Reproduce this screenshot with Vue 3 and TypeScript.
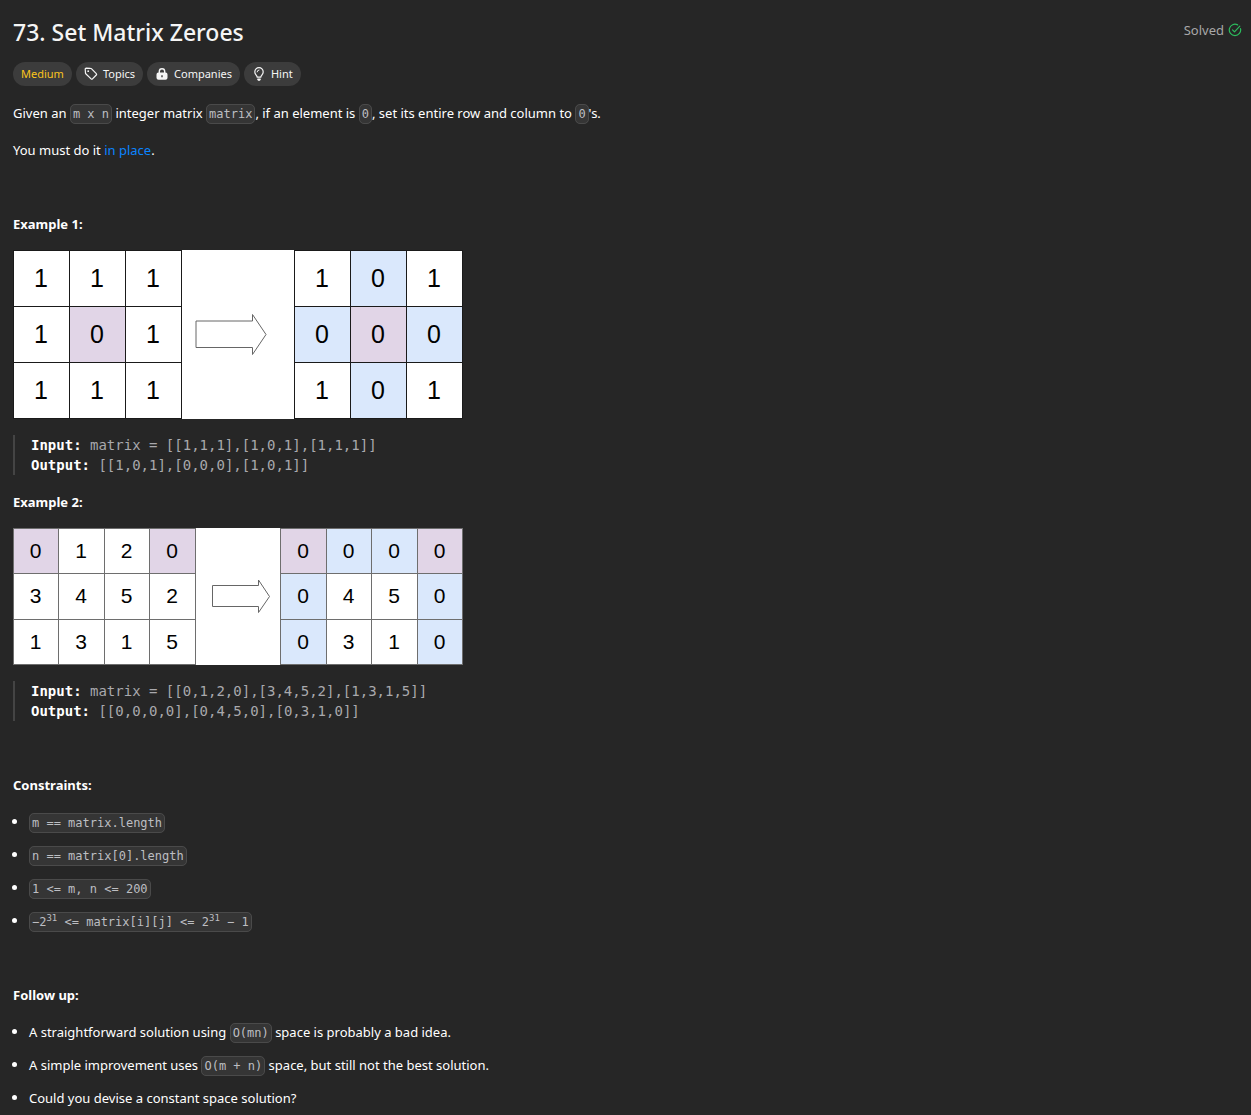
<script setup lang="ts">
interface Grid {
  x: number
  cols: number[]
  cells: string[]
  tints: string[]
}

interface Diagram {
  label: string
  height: number
  rows: number[]
  stroke: string
  fontSize: number
  baseline: number
  grids: Grid[]
  arrow: string
}

interface Example {
  title: string
  input: string
  output: string
  diagram: Diagram
}

// Tints: "." plain, "p" an original zero, "b" a cell cleared because of one.
const fills: Record<string, string> = { '.': '#ffffff', p: '#e1d5e7', b: '#dae8fc' }

const examples: Example[] = [
  {
    title: 'Example 1:',
    input: 'matrix = [[1,1,1],[1,0,1],[1,1,1]]',
    output: '[[1,0,1],[0,0,0],[1,0,1]]',
    diagram: {
      label: 'A 3 by 3 matrix before and after zeroing',
      height: 169,
      rows: [0, 56, 112, 168],
      stroke: '#1a1a1a',
      fontSize: 25,
      baseline: 37,
      grids: [
        { x: 0, cols: [0, 56, 112, 168], cells: ['111', '101', '111'], tints: ['...', '.p.', '...'] },
        { x: 281, cols: [0, 56, 112, 168], cells: ['101', '000', '101'], tints: ['.b.', 'bpb', '.b.'] },
      ],
      arrow: 'M183 71H239.5V64.5L253 84.5L239.5 104.5V97.5H183Z',
    },
  },
  {
    title: 'Example 2:',
    input: 'matrix = [[0,1,2,0],[3,4,5,2],[1,3,1,5]]',
    output: '[[0,0,0,0],[0,4,5,0],[0,3,1,0]]',
    diagram: {
      label: 'A 3 by 4 matrix before and after zeroing',
      height: 137,
      rows: [0, 45, 91, 136],
      stroke: '#6e6e6e',
      fontSize: 21,
      baseline: 30,
      grids: [
        { x: 0, cols: [0, 45, 91, 136, 182], cells: ['0120', '3452', '1315'], tints: ['p..p', '....', '....'] },
        { x: 267, cols: [0, 46, 91, 137, 182], cells: ['0000', '0450', '0310'], tints: ['pbbp', 'b..b', 'b..b'] },
      ],
      arrow: 'M199.5 57.5H245.5V52L256.5 68.5L245.5 84.5V78.5H199.5Z',
    },
  },
]
</script>

<template>
  <main class="problem">
    <header class="head">
      <h1>73. Set Matrix Zeroes</h1>
      <div class="solved">
        Solved
        <svg width="14" height="14" viewBox="0 0 14 14" fill="none" stroke="#2cbb5d" stroke-width="1.2" stroke-linecap="round" stroke-linejoin="round" aria-hidden="true">
          <path d="M9.6 1.900A5.700 5.700 0 1 0 12.500 5.600" />
          <path d="M4.500 6.800L6.500 8.800L11.800 3.200" />
        </svg>
      </div>
    </header>

    <div class="tags">
      <span class="pill medium">Medium</span>
      <button type="button" class="pill">
        <svg width="14" height="14" viewBox="0 0 14 14" fill="none" stroke="currentColor" stroke-width="1.2" stroke-linejoin="round" aria-hidden="true">
          <path d="M1.200 2.200Q1.200 1.200 2.200 1.200L6.500 1.300Q7 1.300 7.400 1.700L12.300 6.600Q13 7.300 12.300 8L8.500 11.900Q7.800 12.600 7.100 11.900L2 7Q1.600 6.600 1.500 6.100Z" />
          <circle cx="4.200" cy="4.200" r=".9" fill="currentColor" stroke="none" />
        </svg>
        Topics
      </button>
      <button type="button" class="pill">
        <svg width="14" height="14" viewBox="0 0 14 14" aria-hidden="true">
          <path fill="currentColor" fill-rule="evenodd" d="M3.600 5.500V4.400a3.400 3.400 0 0 1 6.800 0V5.500A2 2 0 0 1 12.500 7.500V10.800A2 2 0 0 1 10.500 12.800H3.500A2 2 0 0 1 1.500 10.800V7.500A2 2 0 0 1 3.600 5.500ZM5 5.500H9V4.400a2 2 0 0 0-4 0ZM6.300 8.200V10.200H7.700V8.200Z" />
        </svg>
        Companies
      </button>
      <button type="button" class="pill">
        <svg width="14" height="14" viewBox="0 0 14 14" fill="none" stroke="currentColor" stroke-width="1.2" stroke-linecap="round" stroke-linejoin="round" aria-hidden="true">
          <path d="M5.200 10.200C5.200 8.300 2.800 7.600 2.800 4.900a4.200 4.200 0 0 1 8.400 0C11.200 7.600 8.800 8.300 8.800 10.200Z" />
          <path d="M5.100 4.900A2 2 0 0 1 7 3" stroke-width="1" />
          <path d="M5.700 12.200H8.300L7.600 13.200H6.400Z" fill="currentColor" />
        </svg>
        Hint
      </button>
    </div>

    <section>
      <p>Given an <code>m x n</code> integer matrix <code>matrix</code>, if an element is <code>0</code>, set its entire row and column to <code>0</code>'s.</p>
      <p>You must do it <a href="#in-place">in place</a>.</p>
    </section>

    <section>
      <template v-for="ex in examples" :key="ex.title">
        <h2>{{ ex.title }}</h2>
        <svg class="diagram" width="450" :height="ex.diagram.height" role="img" :aria-label="ex.diagram.label">
          <rect width="450" :height="ex.diagram.height" fill="#fff" />
          <g v-for="grid in ex.diagram.grids" :key="grid.x">
            <template v-for="(row, r) in grid.cells" :key="r">
              <template v-for="(value, c) in row" :key="c">
                <rect
                  :x="grid.x + grid.cols[c]"
                  :y="ex.diagram.rows[r]"
                  :width="grid.cols[c + 1] - grid.cols[c]"
                  :height="ex.diagram.rows[r + 1] - ex.diagram.rows[r]"
                  :fill="fills[grid.tints[r][c]]"
                />
                <text
                  :x="grid.x + (grid.cols[c] + grid.cols[c + 1]) / 2"
                  :y="ex.diagram.rows[r] + ex.diagram.baseline"
                  :font-size="ex.diagram.fontSize"
                  text-anchor="middle"
                >{{ value }}</text>
              </template>
            </template>
            <rect v-for="x in grid.cols" :key="'c' + x" :x="grid.x + x" y="0" width="1" :height="ex.diagram.height" :fill="ex.diagram.stroke" />
            <rect v-for="y in ex.diagram.rows" :key="'r' + y" :x="grid.x" :y="y" :width="grid.cols[grid.cols.length - 1] + 1" height="1" :fill="ex.diagram.stroke" />
          </g>
          <path :d="ex.diagram.arrow" fill="#fff" stroke="#666" />
        </svg>
        <pre><strong>Input:</strong> {{ ex.input }}
<strong>Output:</strong> {{ ex.output }}</pre>
      </template>
    </section>

    <section>
      <h2>Constraints:</h2>
      <ul>
        <li><code>m == matrix.length</code></li>
        <li><code>n == matrix[0].length</code></li>
        <li><code>1 &lt;= m, n &lt;= 200</code></li>
        <li><code>−2<sup>31</sup> &lt;= matrix[i][j] &lt;= 2<sup>31</sup> − 1</code></li>
      </ul>
    </section>

    <section>
      <h2>Follow up:</h2>
      <ul>
        <li>A straightforward solution using <code>O(mn)</code> space is probably a bad idea.</li>
        <li>A simple improvement uses <code>O(m + n)</code> space, but still not the best solution.</li>
        <li>Could you devise a constant space solution?</li>
      </ul>
    </section>
  </main>
</template>

<style>
body {
  background: #262626;
}
</style>

<style scoped>
.problem {
  display: flex;
  flex-direction: column;
  padding: 16px 9px 5px 13px;
  color: #fff;
  font: 13px/21px "Noto Sans", "Open Sans", sans-serif;
}

.head {
  display: flex;
  justify-content: space-between;
}

h1 {
  margin: 0;
  font-size: 23px;
  font-weight: 500;
  line-height: 32px;
  color: #f5f5f5;
}

.solved {
  display: flex;
  align-items: center;
  gap: 4px;
  height: 28px;
  color: #a8a8a8;
}

.tags {
  display: flex;
  gap: 4px;
  margin: 14px 0 1px;
}

.pill {
  display: flex;
  align-items: center;
  gap: 5px;
  height: 24px;
  padding: 0 8px;
  border: 0;
  border-radius: 12px;
  background: #3c3c3c;
  color: #f5f5f5;
  font: 11px/16px "Noto Sans", "Open Sans", sans-serif;
}

.medium {
  color: #fac31d;
}

section + section {
  margin-top: 37px;
}

p,
ul {
  margin: 16px 0;
}

section:last-child ul {
  margin-bottom: 0;
}

h2 {
  margin: 0 0 15px;
  font-size: 13px;
  font-weight: 700;
  line-height: 21px;
}

a {
  color: #0a84ff;
  text-decoration: none;
}

code {
  padding: 2px;
  border: 1px solid #4a4a4a;
  border-radius: 5px;
  background: #353535;
  color: #bdbec2;
  font: 12px/16px "DejaVu Sans Mono", monospace;
}

sup {
  font-size: 9px;
  line-height: 0;
}

.diagram {
  display: block;
  margin-bottom: 16px;
}

.diagram text {
  font-family: "Liberation Sans", Arial, sans-serif;
  fill: #000;
}

pre {
  margin: 0 0 17px;
  padding-left: 16px;
  border-left: 2px solid #444;
  color: #a9a9ad;
  font: 14px/20px "DejaVu Sans Mono", monospace;
}

pre strong {
  color: #fff;
}

ul {
  padding-left: 16px;
  list-style: none;
}

li + li {
  margin-top: 12px;
}

li::before {
  content: "";
  display: inline-block;
  width: 5px;
  height: 5px;
  margin: 0 12px 0 -17px;
  border-radius: 50%;
  background: #fff;
  vertical-align: 3px;
}
</style>
